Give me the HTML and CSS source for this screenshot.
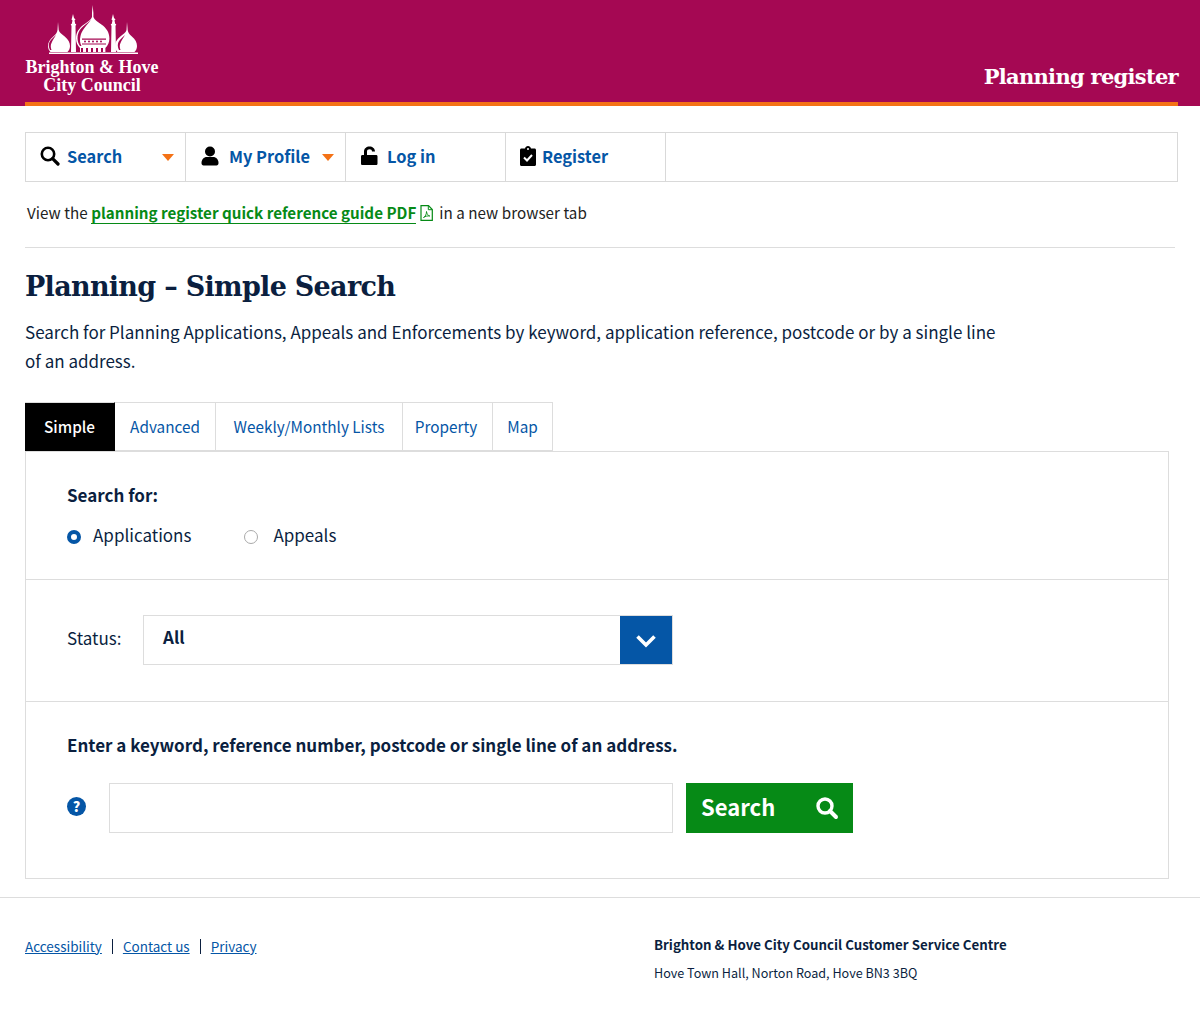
FILE: index.html
```html
<!DOCTYPE html>
<html lang="en">
<head>
  <meta charset="UTF-8">
  <meta name="viewport" content="width=device-width, initial-scale=1.0">
  <title>Planning - Simple Search</title>
  <link rel="stylesheet" href="styles.css">
</head>
<body>
  <header class="site-header">
    <div class="header-inner">
      <div class="logo">
        <svg class="logo-mark" width="94" height="50" viewBox="0 0 94 50">
          <g fill="#fff">
            <!-- centre dome -->
            <path d="M47.600 0l.8 8v4c1 3 4 4.500 8 7.500 5 3.500 8 8 8 14 0 4-1.500 7-4 9.500v4H35v-4c-2.500-2.500-4-5.500-4-9.500 0-6 3-10.500 8-14 4-3 7-4.500 8-7.500V8z"/>
            <!-- minarets -->
            <path d="M28 9l1 4 1.500 1.500-1 1 .8 3.500h1l-.8 2 .5 26h-5l.5-26-.8-2h1l.8-3.500-1-1L27 13z"/>
            <path d="M68 9l1 4 1.500 1.500-1 1 .8 3.500h1l-.8 2 .5 26h-5l.5-26-.8-2h1l.8-3.500-1-1L67 13z"/>
            <!-- side domes -->
            <path d="M13 17l.7 8c.5 2.500 3 4 6 6.500 3.500 3 5.300 6 5.300 9.500 0 2.500-1 4.500-2.500 6h-17C4 45.500 3 43.500 3 41c0-3.500 1.800-6.500 5.300-9.500 3-2.500 3.700-4 4.200-6.500z"/>
            <path d="M82 17l.7 8c.5 2.500 1.200 4 4.200 6.500 3.500 3 5.100 6 5.100 9.500 0 2.500-1 4.500-2.500 6h-17C71 45.500 70 43.500 70 41c0-3.500 1.800-6.500 5.300-9.500 3-2.500 5.700-4 6.200-6.500z"/>
            <rect x="4" y="47.500" width="89" height="1.500"/>
          </g>
          <g fill="#a50853">
            <!-- hollow left side of the domes -->
            <path d="M46 15c-3 3-7 5-9.500 8-2.500 2.500-4 6-4 10 0 3 1 6 2.500 8h1.500c-1.500-3-2-6-1-10 1-5 6-11 10.500-16z"/>
            <path d="M37 33.500h24v1.200H37zM37 38.500h24v1H37z"/>
            <path d="M11 30c-2 2-5 4-6.500 7-1 2-1 5 .5 8h1.500c-1-3-1-5 0-7 1-3 3-5 4.500-8zM80 30c-2 2-5 4-6.500 7-1 2-1 5 .5 8H75.500c-1-3-1-5 0-7 1-3 3-5 4.500-8z"/>
            <rect x="36" y="43" width="2" height="4"/><rect x="41" y="43" width="2" height="4"/><rect x="46" y="43" width="2" height="4"/><rect x="51" y="43" width="2" height="4"/><rect x="56" y="43" width="2" height="4"/>
            <circle cx="40" cy="36.600" r="1"/><circle cx="44" cy="36.600" r="1"/><circle cx="48" cy="36.600" r="1"/><circle cx="52" cy="36.600" r="1"/><circle cx="56" cy="36.600" r="1"/>
          </g>
        </svg>
        <div class="logo-text">Brighton &amp; Hove<br>City Council</div>
      </div>
      <div class="site-title">Planning register</div>
    </div>
  </header>

  <div class="page">
    <nav class="main-nav">
      <a class="nav-item" href="#">
        <svg class="nav-icon" width="20" height="20" viewBox="0 0 20 20"><circle cx="8" cy="8" r="6.200" fill="none" stroke="#000" stroke-width="2.600"/><path d="M12.600 12.600l5.400 5.400" stroke="#000" stroke-width="3.200" stroke-linecap="round"/></svg>
        <span>Search</span><i class="caret"></i>
      </a>
      <a class="nav-item" href="#">
        <svg class="nav-icon nav-icon-profile" width="20" height="20" viewBox="0 0 20 20"><circle cx="10" cy="5.500" r="5"/><path d="M1.500 17c0-4 3-6 5-6h7c2 0 5 2 5 6 0 1.500-.8 2.500-2 2.500h-13c-1.200 0-2-1-2-2.500z"/></svg>
        <span>My Profile</span><i class="caret"></i>
      </a>
      <a class="nav-item" href="#">
        <svg class="nav-icon" width="20" height="20" viewBox="0 0 20 20"><path d="M1 10.500c0-1 .6-1.500 1.500-1.500H4V5.500C4 2.500 6.500.5 9.500.5s5.500 2 5.500 5h-3c0-1.500-1-2.300-2.500-2.300S7 4 7 5.500V9h9c1 0 1.500.5 1.500 1.500v7c0 1-.6 1.500-1.500 1.500H2.500C1.600 19 1 18.500 1 17.500z"/></svg>
        <span>Log in</span>
      </a>
      <a class="nav-item" href="#">
        <svg class="nav-icon nav-icon-small" width="16" height="20" viewBox="0 0 16 20"><path fill-rule="evenodd" d="M1.500 2.500H5C5.300 1 6.500 0 8 0s2.700 1 3 2.500h3.500c.9 0 1.500.6 1.500 1.500v14.500c0 .9-.6 1.500-1.500 1.500h-13C.6 20 0 19.400 0 18.500V4c0-.9.6-1.500 1.500-1.500zM7 3a1 1 0 1 0 2 0 1 1 0 1 0-2 0z"/><path d="M4 11.500l3 3 5-5.500" fill="none" stroke="#fff" stroke-width="2"/></svg>
        <span>Register</span>
      </a>
    </nav>

    <p class="guide-note">View the <a href="#">planning register quick reference guide PDF</a>
      <svg class="pdf-icon" width="13" height="16" viewBox="0 0 13 16"><path d="M1 .7h7.500L12.300 4.500v10.800H1z" fill="none" stroke="#068a16" stroke-width="1.200"/><path d="M8.300 1v3.700H12" fill="none" stroke="#068a16"/><path d="M3.500 12.500c2-1 3-3.500 3-6 .3 2.500 1.500 4 3.300 4.500-2.300-.3-4.300.2-6.300 1.500z" fill="none" stroke="#068a16" stroke-width=".9"/></svg>
      in a new browser tab</p>
    <hr class="rule">

    <h1>Planning – Simple Search</h1>
    <p class="intro">Search for Planning Applications, Appeals and Enforcements by keyword, application reference, postcode or by a single line of an address.</p>

    <ul class="tabs">
      <li class="tab active">Simple</li>
      <li class="tab tab-advanced"><a href="#">Advanced</a></li>
      <li class="tab tab-weekly"><a href="#">Weekly/Monthly Lists</a></li>
      <li class="tab tab-property"><a href="#">Property</a></li>
      <li class="tab tab-map"><a href="#">Map</a></li>
    </ul>

    <form class="panel">
      <section class="panel-row row-for">
        <div class="field-title">Search for:</div>
        <div class="radios">
          <label class="radio radio-on"><i class="radio-dot"></i>Applications</label>
          <label class="radio"><i class="radio-dot"></i>Appeals</label>
        </div>
      </section>
      <section class="panel-row row-status">
        <span class="status-label">Status:</span>
        <div class="select">
          <span class="select-value">All</span>
          <span class="select-btn">
            <svg width="22" height="14" viewBox="0 0 22 14"><path d="M2.500 2.500L11 11l8.500-8.500" fill="none" stroke="#fff" stroke-width="3.600"/></svg>
          </span>
        </div>
      </section>
      <section class="panel-row row-keyword">
        <div class="field-title">Enter a keyword, reference number, postcode or single line of an address.</div>
        <div class="keyword-line">
          <svg class="help" width="19" height="19" viewBox="0 0 19 19"><circle cx="9.500" cy="9.500" r="9.500" fill="#0556a6"/><text x="9.500" y="14.500" text-anchor="middle" class="help-mark">?</text></svg>
          <div class="text-input"></div>
          <button class="search-btn" type="button">
            <span class="search-label">Search</span>
            <svg width="24" height="24" viewBox="0 0 24 24"><circle cx="10" cy="10" r="7" fill="none" stroke="#fff" stroke-width="3.400"/><path d="M15 15l6 6" stroke="#fff" stroke-width="4" stroke-linecap="round"/></svg>
          </button>
        </div>
      </section>
    </form>
  </div>

  <footer class="site-footer">
    <div class="footer-links">
      <a href="#">Accessibility</a><a href="#">Contact us</a><a href="#">Privacy</a>
    </div>
    <div class="footer-contact">
      <div class="contact-name">Brighton &amp; Hove City Council Customer Service Centre</div>
      <div class="contact-address">Hove Town Hall, Norton Road, Hove BN3 3BQ</div>
    </div>
  </footer>
</body>
</html>
```

FILE: styles.css
```css
html, body {
  margin: 0;
  padding: 0;
}
body {
  background: #fff;
  color: #0b1f3f;
  font-family: "Noto Sans CJK SC", "Noto Sans", sans-serif;
  font-size: 17px;
}
a {
  color: #0556a6;
  text-decoration: none;
}
.site-header {
  background: #a50853;
  height: 106px;
  padding: 0 22px 0 25px;
}
.header-inner {
  height: 102px;
  border-bottom: 4px solid #f47216;
  display: flex;
  justify-content: space-between;
  align-items: flex-end;
}
.logo {
  width: 134px;
  align-self: flex-start;
  text-align: center;
  color: #fff;
}
.logo-mark {
  display: block;
  margin: 5px auto 0 20px;
}
.logo-text {
  font-family: "Liberation Serif", serif;
  font-weight: bold;
  font-size: 18px;
  line-height: 18px;
  margin-top: 3px;
  white-space: nowrap;
}
.site-title {
  font-family: "DejaVu Serif", serif;
  font-weight: bold;
  font-size: 21px;
  letter-spacing: -0.7px;
  color: #fff;
  margin-bottom: 13px;
}
.page {
  padding: 26px 22px 0 25px;
}
.main-nav {
  display: flex;
  height: 50px;
  box-sizing: border-box;
  border: 1px solid #d9d9d9;
}
.nav-item {
  position: relative;
  width: 160px;
  box-sizing: border-box;
  border-right: 1px solid #d9d9d9;
  display: flex;
  align-items: center;
  padding-left: 14px;
  font-size: 16.400px;
  font-weight: 700;
}
.nav-item span {
  margin-top: -2px;
}
.nav-icon {
  margin-right: 7px;
  margin-top: -3px;
  flex: none;
}
.nav-icon-profile {
  margin-right: 9px;
}
.nav-icon-small {
  margin-right: 6px;
}
.caret {
  position: absolute;
  right: 11px;
  top: 21px;
  border-left: 6.500px solid transparent;
  border-right: 6.500px solid transparent;
  border-top: 7px solid #f47216;
}
.guide-note {
  margin: 19px 0 0 2px;
  font-size: 15.200px;
  line-height: 22px;
  color: #222;
  letter-spacing: 0.05px;
}
.guide-note a {
  color: #068a16;
  font-weight: 700;
  letter-spacing: 0;
  border-bottom: 1px solid #068a16;
}
.pdf-icon {
  vertical-align: -2px;
  margin: 0 3px 0 0;
}
.rule {
  border: 0;
  border-top: 1px solid #ddd;
  margin: 24px 3px 0 0;
}
h1 {
  font-family: "DejaVu Serif", serif;
  font-weight: bold;
  font-size: 27px;
  letter-spacing: -0.7px;
  line-height: 38px;
  margin: 20px 0 0;
  color: #0b1f3f;
}
.intro {
  width: 985px;
  margin: 11px 0 0;
  font-size: 17px;
  line-height: 29px;
  color: #0b1f3f;
}
.tabs {
  list-style: none;
  display: flex;
  height: 49px;
  margin: 27px 0 0;
  padding: 0;
}
.tab {
  box-sizing: border-box;
  height: 49px;
  padding-bottom: 2px;
  display: flex;
  align-items: center;
  justify-content: center;
  font-size: 15.300px;
  border: 1px solid #ddd;
  border-left: 0;
}
.tab.active {
  width: 90px;
  background: #000;
  border-color: #ddd #000 #000;
  color: #fff;
  font-weight: 500;
}
.tab-advanced { width: 101px; }
.tab-weekly { width: 187px; }
.tab-property { width: 90px; padding-right: 3px; }
.tab-map { width: 60px; }
.panel {
  width: 1144px;
  box-sizing: border-box;
  border: 1px solid #ddd;
}
.panel-row {
  padding-left: 41px;
  border-bottom: 1px solid #ddd;
  box-sizing: border-box;
}
.panel-row:last-child {
  border-bottom: 0;
}
.row-for {
  height: 128px;
  padding-top: 31px;
}
.field-title {
  font-weight: 700;
  font-size: 17px;
  line-height: 24px;
}
.radios {
  display: flex;
  margin-top: 15px;
}
.radio {
  display: flex;
  align-items: center;
  line-height: 26px;
  margin-right: 53px;
}
.radio-dot {
  box-sizing: border-box;
  width: 14px;
  height: 14px;
  border: 1px solid #aaa;
  border-radius: 50%;
  margin-right: 15px;
  margin-top: 4px;
}
.radio-on .radio-dot {
  border: 4.500px solid #0556a6;
  background: #fff;
  margin-right: 12px;
}
.row-status {
  height: 122px;
  display: flex;
  align-items: center;
}
.status-label {
  width: 76px;
  margin-top: -7px;
}
.select {
  width: 530px;
  height: 50px;
  box-sizing: border-box;
  border: 1px solid #ddd;
  display: flex;
  justify-content: space-between;
  margin-top: -2px;
}
.select-value {
  font-weight: 700;
  padding-left: 19px;
  line-height: 42px;
}
.select-btn {
  width: 52px;
  background: #0556a6;
  display: flex;
  align-items: center;
  justify-content: center;
}
.select-btn svg {
  margin-top: 3px;
}
.row-keyword {
  height: 176px;
  padding-top: 31px;
}
.keyword-line {
  display: flex;
  align-items: center;
  margin-top: 26px;
}
.help {
  flex: none;
  margin-right: 23px;
  margin-top: -3px;
}
.help-mark {
  fill: #fff;
  font-size: 14px;
  font-weight: 900;
}
.text-input {
  width: 564px;
  height: 50px;
  box-sizing: border-box;
  border: 1px solid #ddd;
}
.search-btn {
  width: 167px;
  height: 50px;
  margin-left: 13px;
  padding: 0 14px 0 15px;
  border: 0;
  background: #068a16;
  color: #fff;
  display: flex;
  align-items: center;
  justify-content: space-between;
  font-family: inherit;
  font-size: 22px;
  font-weight: 700;
}
.search-label {
  margin-top: -4px;
}
.site-footer {
  margin-top: 18px;
  border-top: 1px solid #ddd;
  height: 112px;
  padding: 0 25px;
  display: flex;
  font-size: 13.500px;
}
.footer-links {
  width: 629px;
  padding-top: 38px;
}
.footer-links a {
  display: inline-block;
  line-height: 15px;
  text-decoration: underline;
  margin-right: 10px;
  padding-right: 10px;
  border-right: 1px solid #0b1f3f;
}
.footer-links a:last-child {
  border-right: 0;
}
.footer-contact {
  padding-top: 37px;
  color: #0b1f3f;
}
.contact-name {
  font-weight: 700;
  font-size: 13.300px;
  line-height: 20px;
}
.contact-address {
  margin-top: 8px;
  font-size: 12.600px;
  line-height: 20px;
}
```
